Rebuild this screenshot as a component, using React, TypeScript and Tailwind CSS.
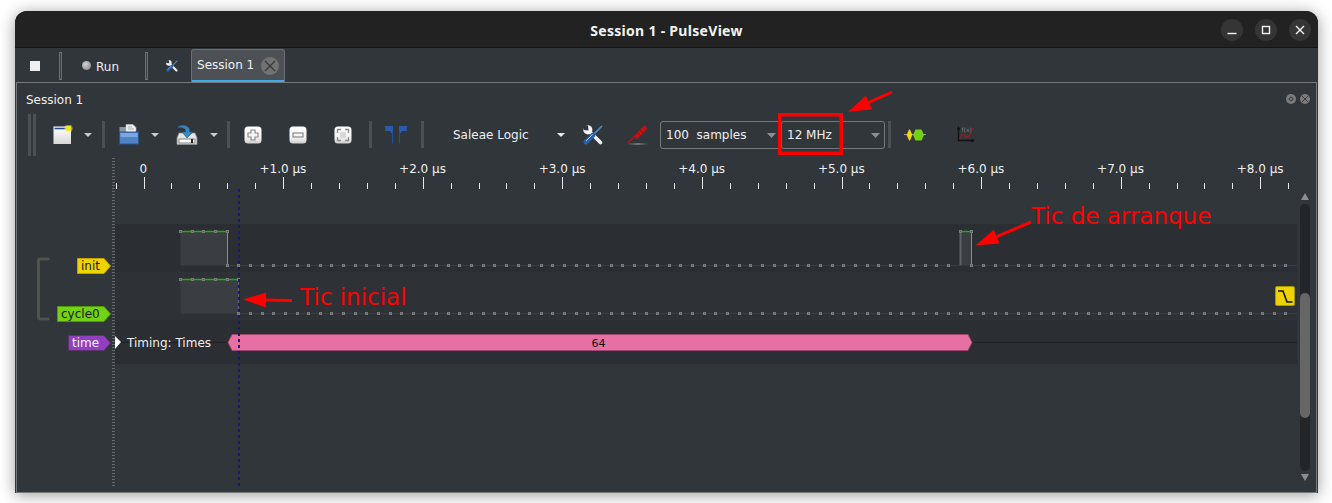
import React from "react";

const FONT = "font-['DejaVu_Sans',sans-serif]";
const SCALE = 139.6;
const X0 = 144;
const SAMPLE = SCALE / 12;

const Tri = ({ c = "#c8ccd0", w = 8, h = 4 }: { c?: string; w?: number; h?: number }) => (
  <svg width={w} height={h} viewBox={`0 0 ${w} ${h}`} className="block shrink-0">
    <polygon points={`0,0 ${w},0 ${w / 2},${h}`} fill={c} />
  </svg>
);

const Sep = ({ ml, mr = 0 }: { ml: number; mr?: number }) => (
  <div style={{ marginLeft: ml, marginRight: mr }} className="w-[3px] h-[27px] bg-[#4b5055] shrink-0" />
);

const TabSep = () => <div className="w-[3px] h-[28px] border border-[#6c7074] bg-[#3a3f44] shrink-0" />;

const NewIcon = () => (
  <svg width="23" height="20" viewBox="0 0 23 20" className="block">
    <defs>
      <linearGradient id="ng" x1="0" y1="0" x2="0" y2="1">
        <stop offset="0" stopColor="#ffffff" />
        <stop offset="1" stopColor="#d8d8d6" />
      </linearGradient>
    </defs>
    <rect x="0.5" y="1.5" width="17.5" height="17.5" fill="url(#ng)" />
    <rect x="1.5" y="2.7" width="14" height="1.6" fill="#1f4a9c" />
    <circle cx="15.5" cy="3.5" r="4.2" fill="#ffff60" opacity="0.45" />
    <circle cx="15.5" cy="3.5" r="2.8" fill="#f4e81a" />
  </svg>
);

const OpenIcon = () => (
  <svg width="20" height="21" viewBox="0 0 20 21" className="block">
    <rect x="0.5" y="3" width="8" height="16" fill="#8b95a0" />
    <path d="M7 0.5h7l3 3V9H7z" fill="#f0f0f0" stroke="#bbbbbb" strokeWidth="0.6" />
    <path d="M9 3h4M9 5h6" stroke="#9a9a9a" strokeWidth="0.8" />
    <rect x="0.5" y="8" width="19" height="12" fill="#4f84c9" stroke="#2a5590" />
    <rect x="1.5" y="9" width="17" height="4" fill="#7ba8de" />
  </svg>
);

const SaveIcon = () => (
  <svg width="22" height="21" viewBox="0 0 22 21" className="block">
    <path d="M3 9h16l2 5v6.5H1V14z" fill="#e6e6e4" stroke="#8c8c8c" strokeWidth="0.8" />
    <rect x="3" y="15" width="16" height="4" fill="#fbfbfb" stroke="#555555" strokeWidth="0.7" />
    <rect x="15" y="15" width="2" height="4" fill="#222222" />
    <path d="M2 3.5C3.5 0.5 11 0 13.5 5V8H17l-6 6-5-6h3.5V6C8 3.5 5 3 2 4z" fill="#3a86bd" stroke="#1f5d8c" strokeWidth="0.6" />
  </svg>
);

const ZoomBtn = ({ children }: { children: React.ReactNode }) => (
  <svg width="18" height="18" viewBox="0 0 18 18" className="block">
    <defs>
      <linearGradient id="zg" x1="0" y1="0" x2="0" y2="1">
        <stop offset="0" stopColor="#ffffff" />
        <stop offset="0.65" stopColor="#f2f2f2" />
        <stop offset="1" stopColor="#cfcfcf" />
      </linearGradient>
    </defs>
    <rect x="0.5" y="0.5" width="17" height="17" rx="3.5" fill="url(#zg)" />
    {children}
  </svg>
);

const Flags = () => (
  <svg width="23" height="18" viewBox="0 0 23 18" className="block">
    <path d="M0 0h8v8H7L5 5H0z" fill="#2a5aa8" />
    <path d="M14 0h8v5h-5l-2 3h-1z" fill="#2a5aa8" />
    <path d="M7 5h1v12.5H7zM14 5h1v12.5h-1z" fill="#24509a" />
  </svg>
);

const ToolsIcon = ({ size = 20 }: { size?: number }) => (
  <svg width={size} height={size} viewBox="0 0 20 20" className="block">
    <line x1="5.5" y1="5.5" x2="17.5" y2="17.5" stroke="#f0f0f0" strokeWidth="3.6" strokeLinecap="round" />
    <circle cx="4.8" cy="4.8" r="4.6" fill="#f4f4f4" />
    <polygon points="0,0 5,0.5 5.5,5.5 0.5,5" fill="#31363b" />
    <line x1="19" y1="1" x2="10.5" y2="9.5" stroke="#4a8cd4" strokeWidth="1.7" />
    <line x1="10" y1="10" x2="3" y2="17" stroke="#2c60a8" strokeWidth="4.8" strokeLinecap="round" />
    <line x1="9.5" y1="9.5" x2="3" y2="16" stroke="#a8c8ec" strokeWidth="1" />
  </svg>
);

const ProbeIcon = () => (
  <svg width="21" height="22" viewBox="0 0 21 22" className="block">
    <defs>
      <linearGradient id="shd" x1="0" y1="0" x2="1" y2="0">
        <stop offset="0" stopColor="#666" stopOpacity="0.2" />
        <stop offset="0.5" stopColor="#777" />
        <stop offset="1" stopColor="#666" stopOpacity="0.1" />
      </linearGradient>
    </defs>
    <rect x="1" y="19" width="20" height="2" fill="url(#shd)" />
    <path d="M0.8 19 9 11" stroke="#c01010" strokeWidth="1.5" />
    <path d="M7 12.5 15 3.5 18 1 20 4.5 17.5 7.5 10 15z" fill="#c81010" />
    <path d="M10.5 8.5 14 12M13 6 16.5 9.5" stroke="#8a0a0a" strokeWidth="0.7" />
  </svg>
);

const DecoderIcon = () => (
  <svg width="22" height="12" viewBox="0 0 22 12" className="block">
    <path d="M0 5.5h22" stroke="#a0a0a0" strokeWidth="1" />
    <polygon points="2.7,6 5,0.5 6,0.5 8.3,6 6,11.5 5,11.5" fill="#f0d800" />
    <polygon points="9,6 11.5,0.5 17.5,0.5 20,6 17.5,11.5 11.5,11.5" fill="#73d216" />
  </svg>
);

const MathIcon = () => (
  <svg width="18" height="18" viewBox="0 0 18 18" className="block">
    <path d="M1.5 1v13.5H16" stroke="#111" strokeWidth="1.4" fill="none" />
    <path d="M-0.5 3.5 1.5 0 3.5 3.5zM14.5 12.5 18 14.5 14.5 16.5z" fill="#111" />
    <path d="M2.5 13C5 8 6 7.5 8 9.5s3.5 2 5-1S14.5 3.5 16 2" stroke="#9c1c1c" strokeWidth="1.1" fill="none" />
    <text x="4.5" y="6" fontSize="6" fill="#7d7d7d" fontFamily="DejaVu Sans">f(x)</text>
  </svg>
);

const WinBtn = ({ children }: { children: React.ReactNode }) => (
  <div className="w-[22px] h-[22px] rounded-full bg-[#353535] flex items-center justify-center">
    <svg width="12" height="12" viewBox="0 0 12 12" className="block" fill="none" stroke="#f2f2f2" strokeWidth="1.4">
      {children}
    </svg>
  </div>
);

const Combo = ({ w, text, tri }: { w: number; text: string; tri: number }) => (
  <div
    style={{ width: w }}
    className="h-[28px] border border-[#76797c] rounded-[3px] flex items-center pl-[5px] relative text-[12px] text-[#eff0f1] shrink-0"
  >
    <span className="whitespace-pre">{text}</span>
    <div className="absolute top-[11px]" style={{ left: tri }}>
      <Tri c="#8b8f93" w={9} h={5} />
    </div>
  </div>
);

const Tag = ({ text, left, top, w, bg, bd, fg }: { text: string; left: number; top: number; w: number; bg: string; bd: string; fg: string }) => (
  <div style={{ left, top, width: w }} className="absolute h-[16px]">
    <svg width={w} height="16" viewBox={`0 0 ${w} 16`} className="absolute inset-0">
      <polygon points={`0.5,0.5 ${w - 7},0.5 ${w - 0.5},8 ${w - 7},15.5 0.5,15.5`} fill={bg} stroke={bd} />
    </svg>
    <span style={{ color: fg }} className="absolute left-[4px] top-0 leading-[16px] text-[12px] whitespace-nowrap">
      {text}
    </span>
  </div>
);

function Ruler() {
  const ticks: React.ReactNode[] = [];
  for (let i = -1; i <= 41; i++) {
    const x = Math.floor(X0 + (i * SCALE) / 5) + 0.5;
    const major = i % 5 === 0;
    ticks.push(<line key={i} x1={x} x2={x} y1={major ? 177 : 183} y2={189} stroke="#e8e8e8" strokeWidth="1" />);
  }
  const labels = [0, 1, 2, 3, 4, 5, 6, 7, 8];
  return (
    <>
      {ticks}
      {labels.map((n) => (
        <text key={n} x={X0 - 0.7 + n * SCALE} y={173} textAnchor="middle" fontSize="12" fill="#eff0f1" fontFamily="DejaVu Sans">
          {n === 0 ? "0" : `+${n}.0 µs`}
        </text>
      ))}
    </>
  );
}

function Trace({ hi, lo, spans }: { hi: number; lo: number; spans: [number, number][] }) {
  const end = 1297;
  const dots: React.ReactNode[] = [];
  const sx = (n: number) => 180.7 + n * SAMPLE;
  const px = (n: number) => Math.floor(sx(n)) + 0.5;
  for (let n = 0; sx(n) < end; n++) {
    const x = px(n);
    const isHi = spans.some(([a, b]) => n >= a && n <= b);
    const isEdge = spans.some(([, b]) => n === b);
    if (isHi) dots.push(<rect key={`h${n}`} x={x - 1} y={hi - 1} width="2" height="2" fill="#555" stroke="#7c7c7c" />);
    if (!isHi || isEdge) dots.push(<rect key={`l${n}`} x={x - 1} y={lo - 1} width="2" height="2" fill="#555" stroke="#7c7c7c" />);
  }
  const last = spans[spans.length - 1];
  return (
    <>
      {spans.map(([a, b], i) => (
        <g key={i}>
          <rect x={px(a)} y={hi} width={px(b) - px(a)} height={lo - hi} fill="#3a3e42" />
          {i === 0 || <line x1={px(a)} x2={px(a)} y1={hi} y2={lo} stroke="#5f6366" strokeWidth="2" />}
          <line x1={px(b)} x2={px(b)} y1={hi} y2={lo} stroke={b === 5 ? "#5f6366" : "#8e9093"} />
          <line x1={px(a)} x2={px(b)} y1={hi} y2={hi} stroke="#18b018" strokeWidth="1.4" />
        </g>
      ))}
      {spans[1] && <line x1={px(spans[0][1])} x2={px(spans[1][0])} y1={lo} y2={lo} stroke="#a81010" />}
      <line x1={px(last[1])} x2={end} y1={lo} y2={lo} stroke="#a81010" />
      {dots}
    </>
  );
}

const Arrow = ({ x1, y1, x2, y2 }: { x1: number; y1: number; x2: number; y2: number }) => {
  const a = Math.atan2(y2 - y1, x2 - x1);
  const L = 23;
  const W = 7.5;
  const bx = x2 - L * Math.cos(a);
  const by = y2 - L * Math.sin(a);
  const px = -Math.sin(a) * W;
  const py = Math.cos(a) * W;
  return (
    <g>
      <line x1={x1} y1={y1} x2={bx} y2={by} stroke="#ff0000" strokeWidth="3" />
      <polygon points={`${x2},${y2} ${bx + px},${by + py} ${bx - px},${by - py}`} fill="#ff0000" />
    </g>
  );
};

export default function App() {
  return (
    <div className={`w-[1332px] h-[503px] bg-white overflow-hidden pt-[11px] pl-[15px] ${FONT}`}>
      <div className="relative w-[1303px] h-[482px] rounded-t-[12px] bg-[#31363b] shadow-[0_2px_16px_rgba(0,0,0,0.4)] flex flex-col">
        {/* Title bar */}
        <div className="h-[37px] shrink-0 rounded-t-[12px] bg-[#222222] border-b border-[#151515] relative flex items-center justify-center">
          <span className="font-['Noto_Sans',sans-serif] font-bold text-[14px] tracking-[0.3px] text-[#f2f2f2] relative top-[1px]">Session 1 - PulseView</span>
          <div className="absolute right-[7px] top-[8px] flex gap-[12px]">
            <WinBtn>
              <path d="M1.5 9.5h9" />
            </WinBtn>
            <WinBtn>
              <rect x="2.5" y="2.5" width="7" height="7" />
            </WinBtn>
            <WinBtn>
              <path d="M2 2l8 8M10 2l-8 8" />
            </WinBtn>
          </div>
        </div>

        {/* Tab bar */}
        <div className="h-[34px] shrink-0 flex items-center pl-[15px] pt-[1px] text-[12px] text-[#eff0f1]">
          <div className="w-[10px] h-[10px] bg-[#efefef] shrink-0" />
          <div className="ml-[19px]"><TabSep /></div>
          <div className="ml-[20px] w-[9px] h-[9px] rounded-full bg-[radial-gradient(circle_at_40%_35%,#d0d0d0,#808080)] shrink-0" />
          <span className="ml-[5px] relative top-[1px]">Run</span>
          <div className="ml-[26px]"><TabSep /></div>
          <div className="ml-[18px]"><ToolsIcon size={12} /></div>
          <div className="ml-[13px] self-end w-[94px] h-[33px] bg-[#4d5156] border border-[#6c7074] border-b-0 rounded-t-[3px] relative flex items-center pl-[5px]">
            <span className="relative top-[-1px]">Session 1</span>
            <div className="absolute left-[69px] top-[7px] w-[18px] h-[18px] rounded-full bg-[#727272] flex items-center justify-center">
              <svg width="12" height="12" viewBox="0 0 12 12" className="block" stroke="#3a3a3a" strokeWidth="1.3">
                <path d="M1 1l10 10M11 1 1 11" />
              </svg>
            </div>
            <div className="absolute left-0 right-0 bottom-0 h-[2px] bg-[#3daee9]" />
          </div>
        </div>

        {/* Dock panel */}
        <div className="flex-1 mx-px border border-[#76797c] flex flex-col min-h-0 relative">
          <div className="h-[29px] shrink-0 flex items-center pl-[9px] text-[12px] text-[#eff0f1] relative">
            <span className="relative top-[2px]">Session 1</span>
            <div className="absolute left-[1269px] top-[11px] w-[10px] h-[10px] rounded-full bg-[#7c7c7c] flex items-center justify-center">
              <div className="w-[4px] h-[4px] rotate-45 border border-[#3b3b3b]" />
            </div>
            <div className="absolute left-[1283px] top-[11px] w-[10px] h-[10px] rounded-full bg-[#7c7c7c] flex items-center justify-center">
              <svg width="6" height="6" viewBox="0 0 6 6" stroke="#3b3b3b" className="block"><path d="M0 0l6 6M6 0 0 6" /></svg>
            </div>
          </div>

          {/* Toolbar */}
          <div className="h-[45px] mb-px shrink-0 flex items-center text-[12px] text-[#eff0f1]">
            <div className="ml-[11px] flex gap-[2px] shrink-0">
              <div className="w-[3px] h-[42px] bg-[#4b5055]" />
              <div className="w-[3px] h-[42px] bg-[#4b5055]" />
            </div>
            <div className="ml-[17px] shrink-0"><NewIcon /></div>
            <div className="ml-[8px]"><Tri /></div>
            <Sep ml={10} />
            <div className="ml-[14px]"><OpenIcon /></div>
            <div className="ml-[12px]"><Tri /></div>
            <div className="ml-[17px]"><SaveIcon /></div>
            <div className="ml-[12px]"><Tri /></div>
            <Sep ml={9} />
            <div className="ml-[14px]"><ZoomBtn><path d="M7 4h4v3h3v4h-3v3H7v-3H4V7h3z" fill="none" stroke="#8a8a8a" strokeWidth="1.2" /></ZoomBtn></div>
            <div className="ml-[27px]"><ZoomBtn><rect x="4" y="7" width="10" height="4" fill="none" stroke="#8a8a8a" strokeWidth="1.2" /></ZoomBtn></div>
            <div className="ml-[27px]"><ZoomBtn><path d="M7 3.5H3.5V7M11 3.5h3.5V7M7 14.5H3.5V11M11 14.5h3.5V11" fill="none" stroke="#8a8a8a" strokeWidth="1.3" /><rect x="6" y="6" width="6" height="6" fill="#d8d8d8" /></ZoomBtn></div>
            <Sep ml={17} />
            <div className="ml-[13px]"><Flags /></div>
            <Sep ml={13} />
            <span className="ml-[29px] w-[101px] whitespace-nowrap">Saleae Logic</span>
            <div className="ml-[3px]"><Tri c="#e8e8e8" /></div>
            <div className="ml-[18px]"><ToolsIcon size={20} /></div>
            <div className="ml-[24px]"><ProbeIcon /></div>
            <div className="ml-[12px] flex shrink-0">
              <Combo w={122} text="100  samples" tri={106} />
              <div className="-ml-px">
                <Combo w={104} text="12 MHz" tri={89} />
              </div>
            </div>
            <Sep ml={3} />
            <div className="ml-[13px]"><DecoderIcon /></div>
            <div className="ml-[31px]"><MathIcon /></div>
          </div>

          {/* Trace view */}
          <div className="flex-1 min-h-0 flex relative">
            <div className="flex-1 min-w-0 flex flex-col">
              <div className="h-[66px] shrink-0" />
              <div className="ml-[98px] mr-[2px] flex flex-col">
                <div className="h-[48px] bg-[#2b2e32]" />
                <div className="h-[48px] bg-[#2e3236]" />
                <div className="h-[44px] bg-[#2b2e32]" />
              </div>
            </div>
            <div className="w-[17px] shrink-0 flex flex-col items-center pl-px pr-[6px] relative z-10">
              <div className="mt-[35px]"><svg width="8" height="7" viewBox="0 0 8 7" className="block"><polygon points="4,0 8,7 0,7" fill="#8b8f93" /></svg></div>
              <div className="mt-[4px] w-[10px] h-[267px] rounded-[5px] bg-[#232629] relative">
                <div className="absolute left-0 top-[89px] w-[10px] h-[125px] rounded-[5px] bg-[#666666]" />
              </div>
              <div className="mt-[3px]"><svg width="8" height="7" viewBox="0 0 8 7" className="block"><polygon points="0,0 8,0 4,7" fill="#8b8f93" /></svg></div>
            </div>

            {/* Traces, drawn on the canvas in window coordinates */}
            <svg className="absolute left-0 top-0 pointer-events-none" width="1300" height="333" viewBox="17 158 1300 333">
              <line x1="113.5" x2="113.5" y1="158" y2="486" stroke="#666a6e" strokeWidth="3" strokeDasharray="1 2" />
              <Ruler />
              <Trace hi={231.5} lo={265.5} spans={[[0, 4], [67, 68]]} />
              <Trace hi={279.5} lo={313.5} spans={[[0, 5]]} />
              <path d="M48 259h-7.5a2 2 0 0 0-2 2v56a2 2 0 0 0 2 2H48" fill="none" stroke="#50544f" strokeWidth="3" strokeLinecap="round" />
              <line x1="121" x2="229" y1="342.5" y2="342.5" stroke="#1e2023" />
              <line x1="972" x2="1297" y1="342.5" y2="342.5" stroke="#1e2023" />
              <polygon points="228,342.5 232,334.5 968,334.5 972,342.5 968,350.5 232,350.5" fill="#e66fa3" stroke="#9b466f" />
              <polygon points="115,336 121,342 115,349" fill="#ffffff" />
              <text x="598.5" y="346.5" textAnchor="middle" fontSize="11" fill="#111" fontFamily="DejaVu Sans">64</text>
              <text x="127" y="347" fontSize="12" fill="#eff0f1" fontFamily="DejaVu Sans">Timing: Times</text>
              <line x1="239" x2="239" y1="189" y2="486" stroke="#14148c" strokeDasharray="3 3" strokeWidth="2" />
              <rect x="1275.5" y="286.5" width="19" height="19" rx="1.5" fill="#edd400" stroke="#a89600" />
              <path d="M1278 291h5l4 11h5.5" fill="none" stroke="#111" strokeWidth="1.6" />
            </svg>

            <Tag text="init" left={60} top={100} w={34} bg="#edd400" bd="#c4a000" fg="#1a1a1a" />
            <Tag text="cycle0" left={40} top={148} w={54} bg="#73d216" bd="#4e9a06" fg="#1a1a1a" />
            <Tag text="time" left={51} top={177} w={43} bg="#8f3fbf" bd="#5c3566" fg="#f4f4f4" />
          </div>
        </div>

        {/* Annotations drawn over the screenshot */}
        <svg className="absolute left-0 top-0 pointer-events-none" width="1303" height="482" viewBox="15 11 1303 482">
          <rect x="779.75" y="114.75" width="61.5" height="38.5" fill="none" stroke="#ff0000" strokeWidth="3.5" />
          <Arrow x1={892} y1={92} x2={848} y2={112} />
          <Arrow x1={1031} y1={222} x2={975.5} y2={245.5} />
          <Arrow x1={292} y1={300.5} x2={243} y2={299.5} />
          <text x="1031" y="224" fontSize="23" fill="#ff0000" fontFamily="DejaVu Sans">Tic de arranque</text>
          <text x="300" y="305" fontSize="23" fill="#ff0000" fontFamily="DejaVu Sans">Tic inicial</text>
        </svg>
      </div>
    </div>
  );
}
